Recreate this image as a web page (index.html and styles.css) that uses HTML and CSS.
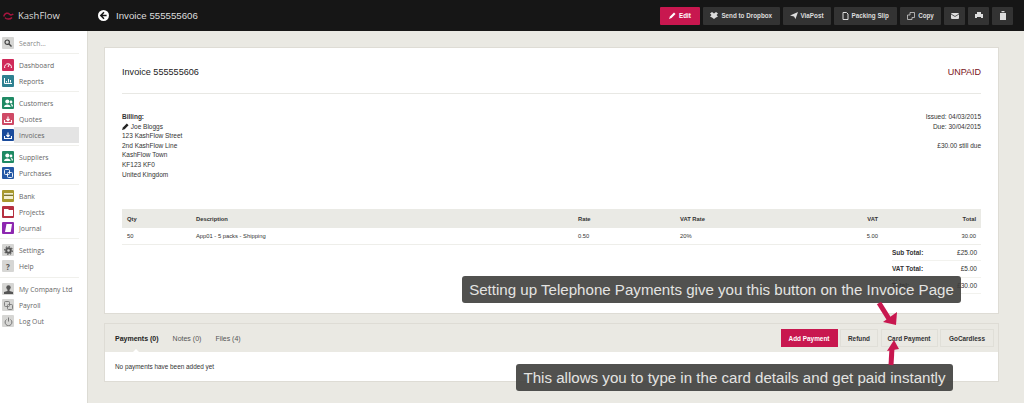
FILE: index.html
```html
<!DOCTYPE html>
<html>
<head>
    <meta charset="UTF-8">
    <title>Invoice 555555606</title>
    <link rel="stylesheet" href="styles.css">
</head>

<body>
    <header class="topbar">
        <div class="brand">
            <svg class="logo" width="11" height="8" viewBox="0 0 11 8"><path d="M.7 4.5 C1.5 1 5 .3 6.5 2.2 C7.5 3.3 9 3 10.3 2 M2 5.6 C3.5 7.6 7 7.6 9 5.4" fill="none" stroke="#a8153f" stroke-width="1.5"/></svg>
            <span>KashFlow</span>
        </div>
        <div class="pagehead">
            <svg width="11" height="11" viewBox="0 0 11 11"><circle cx="5.5" cy="5.5" r="5.5" fill="#fff"/><path d="M6 2.3 L2.8 5.5 L6 8.7 M3 5.5 H8.6" fill="none" stroke="#161616" stroke-width="1.5"/></svg>
            <span>Invoice 555555606</span>
        </div>
        <nav class="actions">
            <a class="btn primary"><svg width="7" height="7" viewBox="0 0 7 7"><path d="M0 7 L1 4.5 L5 .5 L6.5 2 L2.5 6 Z" fill="#fff"/></svg>Edit</a>
            <a class="btn"><svg width="8" height="7" viewBox="0 0 8 7"><path d="M0 1.5 L2 0 L4 1.5 L6 0 L8 1.5 L6.5 3 L8 4.5 L6 5.5 L4 7 L2 5.5 L0 4.5 L1.5 3 Z" fill="#ddd"/></svg>Send to Dropbox</a>
            <a class="btn"><svg width="8" height="7" viewBox="0 0 8 7"><path d="M0 3.5 L8 0 L5.5 7 L4 4.5 Z" fill="#ddd"/></svg>ViaPost</a>
            <a class="btn"><svg width="7" height="8" viewBox="0 0 7 8"><path d="M1 .5 H4.5 L6 2 V7.5 H1 Z" fill="none" stroke="#ddd"/></svg>Packing Slip</a>
            <a class="btn"><svg width="8" height="8" viewBox="0 0 8 8"><path d="M3 .5 H7.5 V5.5 H5 V7.5 H.5 V3 H3 Z" fill="none" stroke="#ccc" stroke-width=".8"/></svg>Copy</a>
            <a class="btn icon"><svg width="8" height="6" viewBox="0 0 8 6"><rect width="8" height="6" rx="1" fill="#ddd"/><path d="M0 1 L4 3.5 L8 1" fill="none" stroke="#333" stroke-width=".8"/></svg></a>
            <a class="btn icon"><svg width="8" height="7" viewBox="0 0 8 7"><path d="M2 0 H6 V2 H8 V6 H6 V5 H2 V6 H0 V2 H2 Z" fill="#ddd"/></svg></a>
            <a class="btn icon"><svg width="6" height="9" viewBox="0 0 6 9"><path d="M0 2 H6 V9 H0 Z M1.5 0 H4.5 V1.2 H1.5 Z" fill="#ddd"/></svg></a>
        </nav>
    </header>

    <div class="layout">
        <aside class="sidebar">
            <div class="menu-search">
                <span class="tile grey"><svg width="8" height="8" viewBox="0 0 8 8"><circle cx="3.2" cy="3.2" r="2.2" fill="none" stroke="#444" stroke-width="1.2"/><path d="M5 5 L7.5 7.5" stroke="#444" stroke-width="1.4"/></svg></span>
                <span>Search...</span>
            </div>
            <ul class="menu">
                <li><span class="tile pink"><svg width="8" height="6" viewBox="0 0 8 6"><path d="M.7 6 A3.4 3.4 0 1 1 7.3 6 M4 5 L5.5 2" fill="none" stroke="#fff" stroke-width="1"/></svg></span>Dashboard</li>
                <li><span class="tile teal"><svg width="8" height="6" viewBox="0 0 8 6"><path d="M.5 0 V5.5 H8 M2.5 4.5 V3 M4.5 4.5 V1 M6.5 4.5 V2" fill="none" stroke="#fff"/></svg></span>Reports</li>
            </ul>
            <ul class="menu">
                <li><span class="tile green"><svg width="9" height="8" viewBox="0 0 9 8"><circle cx="3.3" cy="2.4" r="2"/><path d="M0 8 C0 4.6 6.6 4.6 6.6 8 Z"/><circle cx="7" cy="3" r="1.4"/><path d="M7.2 5 C8.4 5 9 6 9 7.6 H7.6 C7.6 6.6 7.4 5.7 6.6 5.1 Z"/></svg></span>Customers</li>
                <li><span class="tile rose"><svg width="8" height="7" viewBox="0 0 8 7"><path d="M.5 4 V6.5 H7.5 V4 M4 .5 V4.5 M2.4 3 L4 4.7 L5.6 3" fill="none" stroke="#fff" stroke-width="1.1"/></svg></span>Quotes</li>
                <li class="active"><span class="tile navy"><svg width="8" height="7" viewBox="0 0 8 7"><path d="M.5 4 V6.5 H7.5 V4 M4 .5 V4.5 M2.4 3 L4 4.7 L5.6 3" fill="none" stroke="#fff" stroke-width="1.1"/></svg></span><span>Invoices</span></li>
            </ul>
            <ul class="menu">
                <li><span class="tile green"><svg width="9" height="8" viewBox="0 0 9 8"><circle cx="3.3" cy="2.4" r="2"/><path d="M0 8 C0 4.6 6.6 4.6 6.6 8 Z"/><circle cx="7" cy="3" r="1.4"/><path d="M7.2 5 C8.4 5 9 6 9 7.6 H7.6 C7.6 6.6 7.4 5.7 6.6 5.1 Z"/></svg></span>Suppliers</li>
                <li><span class="tile blue"><svg width="9" height="9" viewBox="0 0 9 9"><rect x=".5" y=".5" width="5" height="5" rx="1" fill="none" stroke="#fff" stroke-width=".9"/><rect x="3.5" y="3.5" width="5" height="5" rx="1" fill="none" stroke="#fff" stroke-width=".9"/></svg></span>Purchases</li>
            </ul>
            <ul class="menu">
                <li><span class="tile olive"><svg width="9" height="6" viewBox="0 0 9 6"><rect width="9" height="6" fill="#f3efd0"/><rect y="1.7" width="9" height="1.2" fill="#6d6420"/></svg></span>Bank</li>
                <li><span class="tile crimson"><svg width="9" height="7" viewBox="0 0 9 7"><path d="M0 0 H4 L5 1 H9 V7 H0 Z" fill="#fff"/></svg></span>Projects</li>
                <li><span class="tile purple"><svg width="7" height="8" viewBox="0 0 7 8"><path d="M1.5 0 H7 L5.7 8 H0 Z" fill="#fff"/></svg></span>Journal</li>
            </ul>
            <ul class="menu">
                <li><span class="tile grey"><svg width="9" height="9" viewBox="0 0 9 9"><circle cx="4.5" cy="4.5" r="2.3" fill="none" stroke="#555" stroke-width="2"/><circle cx="4.5" cy="4.5" r="3.9" fill="none" stroke="#555" stroke-width="1.1" stroke-dasharray="1.5 1.5"/></svg></span>Settings</li>
                <li><span class="tile grey mark">?</span>Help</li>
            </ul>
            <ul class="menu">
                <li><span class="tile grey"><svg width="9" height="9" viewBox="0 0 9 9"><circle cx="4.5" cy="2.5" r="2.2" fill="#555"/><path d="M3.5 4 H5.5 V6 L9 7 V9 H0 V7 L3.5 6 Z" fill="#555"/></svg></span>My Company Ltd</li>
                <li><span class="tile grey"><svg width="9" height="9" viewBox="0 0 9 9"><rect x=".5" y=".5" width="5" height="5" rx="1" fill="none" stroke="#777" stroke-width=".9"/><rect x="3.5" y="3.5" width="5" height="5" rx="1" fill="none" stroke="#777" stroke-width=".9"/></svg></span>Payroll</li>
                <li><span class="tile grey"><svg width="9" height="9" viewBox="0 0 9 9"><path d="M2.5 2.5 A3.4 3.4 0 1 0 6.5 2.5 M4.5 .5 V4.5" fill="none" stroke="#777"/></svg></span>Log Out</li>
            </ul>
        </aside>

        <main class="content">
            <section class="invoice">
                <div class="invoice-head">
                    <h1>Invoice 555555606</h1>
                    <span class="status">UNPAID</span>
                </div>
                <div class="details">
                    <div class="address">
                        <strong>Billing:</strong>
                        <div><svg width="7" height="7" viewBox="0 0 8 8"><path d="M0 8 L1 5 L5.5 .5 L7.5 2.5 L3 7 Z" fill="#222"/></svg> Joe Bloggs</div>
                        <div>123 KashFlow Street</div>
                        <div>2nd KashFlow Line</div>
                        <div>KashFlow Town</div>
                        <div>KF123 KF0</div>
                        <div>United Kingdom</div>
                    </div>
                    <div class="dates">
                        <div>Issued: 04/03/2015</div>
                        <div>Due: 30/04/2015</div>
                        <div class="due">£30.00 still due</div>
                    </div>
                </div>
                <table class="lines">
                    <tr><th>Qty</th><th>Description</th><th>Rate</th><th>VAT Rate</th><th class="num">VAT</th><th class="num">Total</th></tr>
                    <tr><td>50</td><td>App01 - 5 packs - Shipping</td><td>0.50</td><td>20%</td><td class="num">5.00</td><td class="num">30.00</td></tr>
                </table>
                <div class="totals">
                    <div class="total-row"><b>Sub Total:</b><span>£25.00</span></div>
                    <div class="total-row"><b>VAT Total:</b><span>£5.00</span></div>
                    <div class="total-row"><b>Total:</b><span>£30.00</span></div>
                </div>
            </section>

            <section class="tabs-panel">
                <div class="tabs-bar">
                    <div class="tabs">
                        <a class="tab current">Payments (0)</a>
                        <a class="tab">Notes (0)</a>
                        <a class="tab">Files (4)</a>
                    </div>
                    <div class="tab-actions">
                        <a class="btn-light primary">Add Payment</a>
                        <a class="btn-light">Refund</a>
                        <a class="btn-light">Card Payment</a>
                        <a class="btn-light">GoCardless</a>
                    </div>
                </div>
                <div class="tab-body">No payments have been added yet</div>
            </section>
        </main>
    </div>

    <!-- annotations on top of the screenshot -->
    <div class="note note-top">Setting up Telephone Payments give you this button on the Invoice Page</div>
    <div class="note note-bottom">This allows you to type in the card details and get paid instantly</div>
    <svg class="arrow arrow-top" width="24" height="26" viewBox="0 0 24 26"><path d="M3 1 L13 17" fill="none" stroke="#c8174f" stroke-width="5"/><path d="M20 23 L7 20 L21 10 Z" fill="#c8174f"/></svg>
    <svg class="arrow arrow-bottom" width="18" height="27" viewBox="0 0 18 27"><path d="M7 26 L8 9" fill="none" stroke="#c8174f" stroke-width="5"/><path d="M10 1 L3 12 L15 10 Z" fill="#c8174f"/></svg>
</body>

</html>
```
FILE: styles.css
```css
* {
    box-sizing: border-box;
}

html, body {
    height: 403px;
    overflow: hidden;
}

body {
    margin: 0;
    position: relative;
    font-family: "Liberation Sans", Arial, sans-serif;
    font-size: 7px;
    color: #333;
    background: #eae9e3;
}

.topbar {
    height: 31px;
    background: #161616;
    color: #ddd;
    display: flex;
    align-items: center;
}

.brand {
    width: 88px;
    padding-left: 3px;
    display: flex;
    align-items: center;
    gap: 4px;
    font-family: "Open Sans", sans-serif;
    font-size: 9.5px;
}

.pagehead {
    margin-left: 10px;
    display: flex;
    align-items: center;
    gap: 7px;
    font-size: 9.7px;
}

.actions {
    margin-left: auto;
    margin-right: 11px;
    display: flex;
    gap: 3px;
}

.btn {
    height: 18px;
    background: #333;
    color: #ddd;
    font-weight: bold;
    font-size: 6.3px;
    display: flex;
    align-items: center;
    justify-content: center;
    gap: 3px;
    border-radius: 1px;
}

.btn:nth-child(1) { width: 40px; }
.btn:nth-child(2) { width: 76.5px; }
.btn:nth-child(3) { width: 48px; }
.btn:nth-child(4) { width: 63.5px; }
.btn:nth-child(5) { width: 41px; }

.btn.primary {
    background: #c8174f;
    color: #fff;
}

.btn.icon {
    width: 21px;
}

.layout {
    display: flex;
    height: 372px;
}

.sidebar {
    width: 88px;
    background: #fff;
    border-right: 1px solid #dcdbd4;
    padding-top: 4px;
    font-family: "Open Sans", sans-serif;
    font-size: 6.8px;
    color: #666;
}

.menu-search {
    height: 16px;
    margin-bottom: 2px;
    padding-left: 2px;
    display: flex;
    align-items: center;
    gap: 5px;
    color: #888;
}

.menu {
    list-style: none;
    margin: 0 8px 0 0;
    padding: 3px 0 2px;
    border-top: 1px solid #f0f0ec;
}

.menu:nth-of-type(3),
.menu:nth-of-type(5) {
    padding-bottom: 3px;
}

.menu li {
    height: 16px;
    padding-left: 2px;
    display: flex;
    align-items: center;
    gap: 5px;
}

.menu li.active {
    background: linear-gradient(to right, #fff 14px, #e4e4e4 14px);
}

.tile {
    width: 12px;
    height: 12px;
    flex: none;
    display: flex;
    align-items: center;
    justify-content: center;
    border-radius: 1px;
    overflow: hidden;
    fill: #fff;
}

.tile.grey { background: #d6d6d4; }
.tile.pink { background: #d02a5a; }
.tile.teal { background: #2f8191; }
.tile.green { background: #1f8a64; }
.tile.rose { background: #cf4a66; }
.tile.navy { background: #1a4b9c; }
.tile.blue { background: #2458a5; }
.tile.olive { background: #a8992e; }
.tile.crimson { background: #b53040; }
.tile.purple { background: #8d28b0; }

.tile.mark {
    color: #555;
    font-weight: bold;
    font-size: 8px;
}

.content {
    flex: 1;
    padding: 16px 25px 0 16px;
}

.invoice {
    height: 267px;
    background: #fff;
    border: 1px solid #dedcd5;
    padding: 0 17px;
}

.invoice-head {
    height: 46px;
    padding-top: 2px;
    border-bottom: 1px solid #e8e8e4;
    display: flex;
    justify-content: space-between;
    align-items: center;
}

h1 {
    margin: 0;
    font-size: 9.1px;
    font-weight: normal;
    color: #222;
}

.status {
    font-size: 9px;
    color: #7a1420;
}

.details {
    margin-top: 18px;
    display: flex;
    justify-content: space-between;
    line-height: 9.6px;
    font-size: 6.5px;
}

.address strong {
    display: block;
}

.address svg {
    vertical-align: -1px;
}

.dates {
    text-align: right;
}

.due {
    margin-top: 9.6px;
}

.lines {
    width: 100%;
    margin-top: 30px;
    border-collapse: collapse;
    table-layout: fixed;
    font-size: 5.8px;
}

.lines th {
    height: 19px;
    background: #eaeae5;
    text-align: left;
    padding: 0 5px;
}

.lines td {
    height: 16px;
    padding: 0 5px;
    border-bottom: 1px solid #eeeeea;
}

.lines th:nth-child(1) { width: 69px; }
.lines th:nth-child(2) { width: 382px; }
.lines th:nth-child(3) { width: 102px; }
.lines th:nth-child(4) { width: 110px; }

.lines .num {
    text-align: right;
}

.totals {
    margin-left: auto;
    width: 89px;
    font-size: 6.5px;
}

.total-row {
    height: 16.5px;
    padding: 0 4px 0 0;
    display: flex;
    justify-content: space-between;
    align-items: center;
    border-bottom: 1px solid #f2f2ee;
}

.tabs-panel {
    margin-top: 9px;
    border: 1px solid #dedcd5;
}

.tabs-bar {
    height: 28px;
    padding: 0 4px 0 10px;
    display: flex;
    justify-content: space-between;
    align-items: center;
    position: relative;
}

.tabs {
    display: flex;
    gap: 14px;
    font-size: 7px;
    color: #555;
}

.tab.current {
    font-weight: bold;
    color: #222;
}

/* small notch under the current tab */
.tab.current::after {
    content: "";
    position: absolute;
    left: 28px;
    bottom: 0;
    border: 3px solid transparent;
    border-top: 0;
    border-bottom-color: #fff;
}

.tab-actions {
    display: flex;
    gap: 2.5px;
}

.btn-light {
    height: 18px;
    border: 1px solid #e0dfd8;
    font-weight: bold;
    font-size: 6.4px;
    display: flex;
    align-items: center;
    justify-content: center;
}

.btn-light:nth-child(1) { width: 57px; }
.btn-light:nth-child(2) { width: 38px; }
.btn-light:nth-child(3) { width: 57px; }
.btn-light:nth-child(4) { width: 54px; }

.btn-light.primary {
    background: #c8174f;
    border-color: #c8174f;
    color: #fff;
}

.tab-body {
    height: 29px;
    padding-left: 10px;
    background: #fff;
    display: flex;
    align-items: center;
    font-size: 6.4px;
}

.note {
    position: absolute;
    height: 27px;
    background: rgba(62, 62, 60, 0.9);
    color: #e4e4e2;
    border-radius: 3px;
    font-size: 15.1px;
    line-height: 27px;
    text-align: center;
    white-space: nowrap;
}

.note-top {
    left: 462px;
    top: 276px;
    width: 499px;
}

.note-bottom {
    left: 516px;
    top: 364px;
    width: 437px;
}

.arrow {
    position: absolute;
}

.arrow-top {
    left: 876px;
    top: 302px;
}

.arrow-bottom {
    left: 884px;
    top: 339px;
}
```
